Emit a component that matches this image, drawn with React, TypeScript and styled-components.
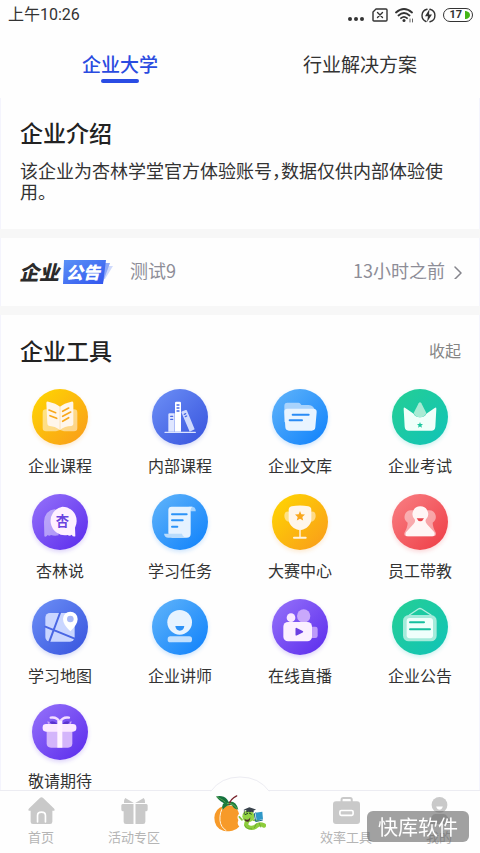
import React, { useState } from "react";
import styled, { createGlobalStyle } from "styled-components";

const GlobalStyle = createGlobalStyle`
  * { box-sizing: border-box; }
  body { margin: 0; background: #fff; }
  body, button {
    font-family: "Noto Sans CJK SC", "Noto Sans", sans-serif;
    color: #333;
  }
  button { margin: 0; padding: 0; border: 0; background: none; cursor: pointer; }
  a { color: inherit; text-decoration: none; }
  h2, p { margin: 0; }
  svg { display: block; }
`;

const Page = styled.div`
  display: flex;
  flex-direction: column;
  min-height: 100vh;
  background: #fefefe;
`;

const StatusBar = styled.div`
  display: flex;
  align-items: center;
  justify-content: space-between;
  height: 32px;
  padding: 0 7px 0 8px;
  font-size: 16px;
  line-height: 24px;
`;

const Clock = styled.time`
  padding-bottom: 2px;
  font-family: Roboto, "Noto Sans CJK SC", sans-serif;
`;

const StatusIcons = styled.div`
  display: flex;
  align-items: center;
  gap: 7px;
  padding-bottom: 2px;
`;

const Battery = styled.span`
  display: flex;
  align-items: center;
  justify-content: flex-end;
  gap: 3px;
  width: 30px;
  height: 14px;
  padding-right: 2px;
  border: 1px solid #333;
  border-radius: 7px;
  font-family: Roboto, sans-serif;
  font-size: 11px;
  font-weight: 700;
  line-height: 12px;
`;

const TabBar = styled.div`
  display: flex;
  height: 66px;
  padding-top: 18px;
`;

const Tab = styled.button<{ $active: boolean }>`
  display: flex;
  flex: 1;
  flex-direction: column;
  align-items: center;
  align-self: flex-start;
  gap: 1px;
  font-size: 19px;
  line-height: 28px;
  font-weight: ${(p) => (p.$active ? 500 : 400)};
  color: ${(p) => (p.$active ? "#2a4be0" : "#333")};

  &::after {
    content: "";
    width: 38px;
    height: 4px;
    border-radius: 2px;
    background: ${(p) => (p.$active ? "#2a4ce4" : "transparent")};
  }
`;

const Main = styled.main`
  flex: 1;
  box-shadow: inset 1px 0 #f4f4fd, inset -1px 0 #f4f4fd;
`;

const Divider = styled.div`
  height: 9px;
  background: #f7f7f7;
`;

const Intro = styled.section`
  padding: 18px 18px 27px 20px;
`;

const Heading = styled.h2`
  font-size: 23px;
  line-height: 32px;
  font-weight: 500;
  color: #222;
`;

const IntroText = styled.p`
  margin-top: 12px;
  font-size: 18px;
  line-height: 21px;
  font-feature-settings: "halt";
`;

const NoticeRow = styled.a`
  display: flex;
  align-items: center;
  height: 68px;
  padding: 0 18px 0 19px;
  font-size: 18px;
  line-height: 26px;
  color: #8d8d97;
`;

const NoticeBrand = styled.span`
  display: flex;
  align-items: center;
  gap: 3px;
  width: 111px;
  font-size: 20px;
  line-height: 24px;
  font-weight: 900;
  font-style: italic;
  color: #2b2b2b;
`;

const BrandBadge = styled.span`
  position: relative;
  width: 51px;
  height: 24px;
  padding-left: 4px;
  font-size: 17px;
  line-height: 24px;
  color: #fff;

  svg {
    position: absolute;
    inset: 0;
  }
  span {
    position: relative;
  }
`;

const NoticeTitle = styled.span`
  flex: 1;
  padding-bottom: 4px;
`;

const NoticeTime = styled.time`
  padding-bottom: 4px;
  margin-right: 9px;
`;

const ToolsHeader = styled.div`
  display: flex;
  align-items: center;
  justify-content: space-between;
  padding: 19px 19px 0 20px;
`;

const Collapse = styled.button`
  font-size: 16px;
  line-height: 24px;
  color: #858585;
`;

const ToolGrid = styled.div`
  display: grid;
  grid-template-columns: repeat(4, 1fr);
  row-gap: 19px;
  margin-top: 23px;
`;

const Tool = styled.a`
  display: flex;
  flex-direction: column;
  align-items: center;
  gap: 10px;
  font-size: 16px;
  line-height: 20px;
`;

const Disc = styled.span<{ $from: string; $to: string }>`
  width: 56px;
  height: 56px;
  border-radius: 50%;
  background: linear-gradient(135deg, ${(p) => p.$from}, ${(p) => p.$to});
  box-shadow: 0 2px 4px ${(p) => p.$to}33;
`;

const NavBar = styled.nav`
  position: sticky;
  bottom: 0;
  display: grid;
  grid-template-columns: 82fr 104fr 108fr 104fr 82fr;
  height: 63px;
  border-top: 1px solid #ececf2;
  background: #fefefe;
`;

const NavItem = styled.a`
  display: flex;
  flex-direction: column;
  align-items: center;
  gap: 4px;
  padding-top: 6px;
  font-size: 13px;
  line-height: 18px;
  color: #b5b5b5;
`;

const NavCenter = styled.a`
  position: relative;
  display: flex;
  justify-content: center;
  padding-top: 4px;
`;

const Bump = styled.svg`
  position: absolute;
  top: -15px;
  left: 50%;
  margin-left: -30px;
`;

const Watermark = styled.div`
  position: fixed;
  right: 11px;
  bottom: 11px;
  padding: 0 11px;
  border-radius: 6px;
  background: rgba(98, 98, 98, 0.6);
  font-size: 20px;
  line-height: 31px;
  color: #fff;
`;

type Tint = { from: string; to: string };
const gold: Tint = { from: "#ffd800", to: "#f99a1c" };
const indigo: Tint = { from: "#6d90f6", to: "#3652dd" };
const sky: Tint = { from: "#62b5fa", to: "#0d80fb" };
const green: Tint = { from: "#25cf94", to: "#10c3b8" };
const violet: Tint = { from: "#9673fa", to: "#5a2aec" };
const red: Tint = { from: "#f98084", to: "#ee3c45" };

const line = (stroke: string, width = 5) => ({
  stroke,
  strokeWidth: width,
  strokeLinecap: "round" as const,
  strokeLinejoin: "round" as const,
  fill: "none",
});

const starPath =
  "M0-15 4-5.500 15-4.500 7 3 9.500 13.500 0 8-9.500 13.500-7 3-15-4.500-4-5.500Z";

const tools: { label: string; tint: Tint; art: React.ReactNode }[] = [
  {
    label: "企业课程",
    tint: gold,
    art: (
      <>
        <path d="M42 61H126Q136 61 136 71V117Q136 127 126 127H96L84 123 72 127H42Q32 127 32 117V71Q32 61 42 61Z" fill="#fff" opacity=".5" />
        <path d="M43 42Q43 37 49 38Q72 43 84 53Q96 43 118 38Q124 37 124 42V105Q124 110 118 111Q98 112 84 122Q70 112 50 110Q46 109 46 103Z" fill="#fff6ea" />
        <path d="M84 53V121" {...line("#fbd9a0", 2)} />
        <path d="M51 63 71 71M54 80 74 88M92 67 110 57M92 82 116 69M92 97 110 86" {...line("#f8a81c")} />
      </>
    ),
  },
  {
    label: "内部课程",
    tint: indigo,
    art: (
      <>
        <path d="M49 77Q49 73 53 73H68V128H49Z" fill="#dfe6ff" />
        <path d="M69 42Q69 38 73 38H83Q87 38 87 42V128H69Z" fill="#fff" />
        <path d="M88 70Q88 68 91 67L101 63Q104 62 105 65L128 121 113 128Z" fill="#cfdafd" />
        <path d="M39 130H130" {...line("#dbe4ff", 4)} />
        <path d="M56 82H62M56 91H62M75 48H81M75 57H81M75 66H81M97 76 101 74M100 83 104 81" {...line("#4a69e5", 4)} />
      </>
    ),
  },
  {
    label: "企业文库",
    tint: sky,
    art: (
      <>
        <path d="M37 100V50Q37 41 46 41H80Q84 41 88 48H110Q118 48 123 53L130 64Z" fill="#a9d3fc" />
        <path d="M46 59H124Q135 59 134 70L130 115Q129 125 119 125H51Q41 125 40 115L37 70Q36 59 46 59Z" fill="#e9f4ff" />
        <path d="M62 77H110M53 94H90" {...line("#2a8bf5", 6)} />
      </>
    ),
  },
  {
    label: "企业考试",
    tint: green,
    art: (
      <>
        <path d="M40 57 65 74Q69 84 84 85 99 84 103 74L128 57Q133 53 133 60L130 113Q129 125 118 125H50Q39 125 38 113L35 60Q35 53 40 57Z" fill="#f0fffa" />
        <path d="M80 43Q84 36 88 43L103 72Q99 84 84 85 69 84 65 72Z" fill="#a8ebd4" />
        <path d={starPath} transform="translate(84 108) scale(.6)" fill="#1dc79e" />
      </>
    ),
  },
  {
    label: "杏林说",
    tint: violet,
    art: (
      <>
        <path d="M70 45Q38 49 36 83L37 127Q42 130 47 123 52 128 57 123 67 127 80 124Z" fill="#fff" opacity=".45" />
        <path d="M91 38A43 43 0 0 1 134 81Q134 92 129 101L130 127Q123 130 119 122 113 128 107 123A43 43 0 1 1 91 38Z" fill="#fff0ff" />
        <text x="91" y="97" textAnchor="middle" fontSize="40" fontWeight="700" fill="#6a43df">杏</text>
      </>
    ),
  },
  {
    label: "学习任务",
    tint: sky,
    art: (
      <>
        <path d="M110 38H122Q132 40 131 52H116Z" fill="#a5d3fd" />
        <path d="M59 38H121Q116 41 116 50V119Q116 131 104 131H60Q49 124 49 116V48Q49 38 59 38Z" fill="#e5f2ff" />
        <path d="M36 119H90Q92 128 103 131H49Q38 131 36 119Z" fill="#b9dcfc" />
        <path d="M60 61H104M60 79H92M60 98H76" {...line("#2b93f8", 6)} />
      </>
    ),
  },
  {
    label: "大赛中心",
    tint: gold,
    art: (
      <>
        <path d="M51 53Q37 51 37 66 37 83 55 84M117 53Q131 51 131 66 131 83 113 84" fill="#fff" opacity=".5" />
        <path d="M59 37Q84 32 109 37 118 39 118 48V76Q118 91 103 102 84 115 65 102 50 91 50 76V48Q50 39 59 37Z" fill="#fff6ea" />
        <path d="M84 109V128" {...line("#ffeac8", 5)} />
        <path d="M66 131H101" {...line("#fff3dd", 6)} />
        <path d={starPath} transform="translate(84 66)" fill="#f9a71c" />
      </>
    ),
  },
  {
    label: "员工带教",
    tint: red,
    art: (
      <>
        <path d="M58 49A20 20 0 0 0 47 86Q47 99 37 117 35 126 44 127H124Q134 126 132 117 122 99 122 86A20 20 0 0 0 111 49Z" fill="#fff" opacity=".45" />
        <path d="M85 37A23 23 0 0 1 102 76Q98 82 105 91L127 115Q131 127 121 127H48Q37 127 42 115L64 91Q72 82 68 76A23 23 0 0 1 85 37Z" fill="#fff5f5" />
        <path d="M74 73H96Q92 82 85 82 78 82 74 73Z" fill="#e9444d" />
      </>
    ),
  },
  {
    label: "学习地图",
    tint: indigo,
    art: (
      <>
        <rect x="40" y="42" width="88" height="86" rx="14" fill="#cad6ff" />
        <path d="M40 83 128 119M84 42 52 128" {...line("#4966e4", 6)} />
        <path d="M115 38A22 22 0 0 1 137 60Q137 76 115 97 93 76 93 60A22 22 0 0 1 115 38Z" fill="#fff" />
        <circle cx="115" cy="60" r="10" fill="#a9b9f7" />
      </>
    ),
  },
  {
    label: "企业讲师",
    tint: sky,
    art: (
      <>
        <circle cx="83" cy="70" r="37" fill="#e7f3ff" />
        <path d="M70 81H97Q95 95 83.500 95 72 95 70 81Z" fill="#2c91f7" />
        <rect x="47" y="112" width="73" height="18" rx="8" fill="#c2e0fe" />
      </>
    ),
  },
  {
    label: "在线直播",
    tint: violet,
    art: (
      <>
        <circle cx="95" cy="51" r="20" fill="#c9a8fb" />
        <circle cx="57" cy="56" r="13" fill="#f9e8ff" />
        <rect x="112" y="83" width="25" height="34" rx="7" fill="#bd9afa" />
        <rect x="34" y="69" width="86" height="58" rx="14" fill="#fbefff" />
        <path d="M73 89V107L91 98Z" fill="#6b3fe2" stroke="#6b3fe2" strokeWidth="5" strokeLinejoin="round" />
      </>
    ),
  },
  {
    label: "企业公告",
    tint: green,
    art: (
      <>
        <path d="M52 48 79 30Q84 27 89 30L117 48" {...line("#b4efe0", 4)} />
        <rect x="33" y="48" width="101" height="79" rx="17" fill="#a5ebdb" />
        <rect x="44" y="57" width="79" height="61" rx="9" fill="#effffb" />
        <path d="M54 70H96M54 91H114" {...line("#16bf9f", 6)} />
      </>
    ),
  },
  {
    label: "敬请期待",
    tint: violet,
    art: (
      <>
        <path d="M44 78H121V118Q121 131 108 131H57Q44 131 44 118Z" fill="#d4b5fb" />
        <path d="M48 60 46 52 60 56M117 60 119 52 105 56" fill="#cba9fb" />
        <path d="M83 55Q76 38 56 41M84 55Q91 38 111 41" {...line("#f3dcff", 7)} />
        <path d="M52 55Q65 46 76 60Q64 65 52 55ZM114 55Q102 46 91 60Q103 65 114 55Z" fill="#5b33cf" />
        <rect x="32" y="60" width="101" height="23" rx="10" fill="#fbe9ff" />
        <path d="M76 51H91V131H76Z" fill="#fff3ff" />
      </>
    ),
  },
];

const grey = "#c9c9c9";

const HomeIcon = () => (
  <svg width="27" height="27" viewBox="0 0 82 82">
    <path d="M36 3Q41-1 46 3L79 35Q84 42 76 42H74V75Q74 82 67 82H15Q8 82 8 75V42H6Q-2 42 3 35Z" fill={grey} />
    <path d="M29 76V56Q29 46 41 46 53 46 53 56V76" {...line("#fff", 5)} />
  </svg>
);

const GiftIcon = () => (
  <svg width="27" height="27" viewBox="0 0 82 82">
    <path d="M13 3 39 18H9Q8 8 13 3ZM69 3 43 18H73Q74 8 69 3Z" fill={grey} />
    <path d="M5 21H38V82H15Q8 82 8 75V43H5Q1 43 1 38V26Q1 21 5 21ZM44 21H77Q81 21 81 26V38Q81 43 77 43H74V75Q74 82 67 82H44Z" fill={grey} />
  </svg>
);

const CaseIcon = () => (
  <svg width="27" height="27" viewBox="0 0 82 82">
    <path d="M26 16V8Q26 3 31 3H52Q57 3 57 8V16" {...line(grey, 6)} />
    <rect y="13" width="82" height="69" rx="9" fill={grey} />
    <rect x="21" y="41" width="40" height="15" rx="4" {...line("#fff", 5)} />
  </svg>
);

const PersonIcon = () => (
  <svg width="27" height="27" viewBox="0 0 82 82">
    <circle cx="41" cy="24" r="24" fill={grey} />
    <path d="M31 29H51Q48 39 41 39 34 39 31 29Z" fill="#fff" />
    <path d="M28 52H54Q60 52 63 57L77 75Q79 82 72 82H10Q3 82 5 75L19 57Q22 52 28 52Z" fill={grey} />
  </svg>
);

const MascotIcon = () => (
  <svg width="52" height="37" viewBox="0 0 156 110">
    <path d="M28 33Q3 39 1 68 1 99 28 107 34 109 41 108 48 109 55 107 69 103 76 94 68 86 73 75 67 64 75 56 70 37 56 32 40 29 28 33Z" fill="#f79a29" />
    <path d="M29 34Q16 50 18 76 20 96 36 106" {...line("#fff3df", 3)} />
    <path d="M6 4Q27-1 39 12 46 20 44 30 29 25 20 18 12 12 6 4Z" fill="#14713d" />
    <path d="M9 5Q26 12 43 29" {...line("#71ba55", 2)} />
    <path d="M26 44Q20 22 41 20 66 14 73 43 61 43 54 30 40 26 26 44Z" fill="#1d7b3e" />
    <path d="M46 28Q47 13 68 2" {...line("#78222b", 4)} />
    <path d="M40 25Q58 23 69 40" {...line("#82c75f", 2)} />
    <path d="M100 78Q91 93 106 97 119 101 129 91 137 84 150 91" {...line("#8dcd3b", 13)} />
    <path d="M93 92Q99 104 113 101M121 98 127 86M136 84 140 96" {...line("#5e9d2b", 2)} />
    <path d="M84 74 76 65M119 75 132 76" {...line("#85c43a", 5)} />
    <circle cx="103" cy="63" r="18" fill="#94d444" />
    <path d="M91 70Q102 79 109 66 109 80 99 80 92 79 91 70Z" fill="#51352b" />
    <path d="M94 58 101 55M106 54 112 57" {...line("#274b22", 3)} />
    <path d="M90 43 106 36 126 43 109 51Z" fill="#38424b" />
    <path d="M97 46V52Q107 47 119 52V46L108 51Z" fill="#28343d" />
    <path d="M91 44V57" {...line("#28343d", 2)} />
    <path d="M124 53 145 50 147 72 128 76Z" fill="#3098c8" />
    <path d="M124 53 121 56 125 79 145 75" {...line("#1d6789", 3)} />
  </svg>
);

const tabs = ["企业大学", "行业解决方案"];

export default function App() {
  const [tab, setTab] = useState(0);

  return (
    <Page lang="zh-CN">
      <GlobalStyle />
      <StatusBar>
        <Clock>上午10:26</Clock>
        <StatusIcons>
          <svg width="18" height="16" viewBox="0 0 18 16" fill="#333">
            <circle cx="3" cy="12" r="2" />
            <circle cx="9" cy="12" r="2" />
            <circle cx="15" cy="12" r="2" />
          </svg>
          <svg width="16" height="14" viewBox="0 0 16 14">
            <path d="M4 1H14Q15 1 15 2V12Q15 13 14 13H2Q1 13 1 12V4Z" {...line("#333", 1.4)} />
            <path d="M5.500 4.500 10.500 9.500M10.500 4.500 5.500 9.500" {...line("#333", 1.4)} />
          </svg>
          <svg width="19" height="16" viewBox="0 0 19 16">
            <path d="M1 5.500Q9-1.500 17 5.500M3.500 8.500Q9 3.500 14.500 8.500M6 11.200Q9 8.500 12 11.200" {...line("#333", 1.8)} />
            <circle cx="9" cy="13.500" r="1.500" fill="#333" />
            <path d="M15 12V15M17.500 12V15" {...line("#666", 1)} />
          </svg>
          <svg width="15" height="15" viewBox="0 0 15 15">
            <path d="M6 1.200A6.500 6.500 0 0 0 5 13.500M9 1.200A6.500 6.500 0 0 1 9 13.800" {...line("#333", 1.4)} />
            <path d="M8.500 1 4 8.300H7L6 14 11 6.500H8Z" fill="#333" />
          </svg>
          <Battery>
            17
            <svg width="5" height="8" viewBox="0 0 5 8">
              <path d="M0 0H1Q5 1 5 4 5 7 1 8H0Z" fill="#43b516" />
            </svg>
          </Battery>
        </StatusIcons>
      </StatusBar>

      <TabBar role="tablist">
        {tabs.map((name, i) => (
          <Tab key={name} role="tab" aria-selected={tab === i} $active={tab === i} onClick={() => setTab(i)}>
            {name}
          </Tab>
        ))}
      </TabBar>

      <Main>
        <Intro>
          <Heading>企业介绍</Heading>
          <IntroText>该企业为杏林学堂官方体验账号，数据仅供内部体验使用。</IntroText>
        </Intro>
        <Divider />
        <NoticeRow href="#notice">
          <NoticeBrand>
            企业
            <BrandBadge>
              <svg width="51" height="24" viewBox="0 0 51 24">
                <defs>
                  <linearGradient id="badge" x1="0" y1="0" x2="1" y2="1">
                    <stop offset="0" stopColor="#5b93f7" />
                    <stop offset="1" stopColor="#3154ee" />
                  </linearGradient>
                </defs>
                <path d="M46 6H51L43 19H40Z" fill="#cfdafc" />
                <path d="M43 3H48L41 22H38Z" fill="#8ea8f7" />
                <path d="M2 0H44L41 24H1Z" fill="url(#badge)" />
              </svg>
              <span>公告</span>
            </BrandBadge>
          </NoticeBrand>
          <NoticeTitle>测试9</NoticeTitle>
          <NoticeTime>13小时之前</NoticeTime>
          <svg width="8" height="14" viewBox="0 0 8 14">
            <path d="M1 2 7 8 1 14" {...line("#85858c", 1.5)} />
          </svg>
        </NoticeRow>
        <Divider />
        <section>
          <ToolsHeader>
            <Heading>企业工具</Heading>
            <Collapse>收起</Collapse>
          </ToolsHeader>
          <ToolGrid>
            {tools.map(({ label, tint, art }) => (
              <Tool key={label} href="#tool">
                <Disc $from={tint.from} $to={tint.to}>
                  <svg width="56" height="56" viewBox="0 0 168 168" aria-hidden="true">
                    {art}
                  </svg>
                </Disc>
                {label}
              </Tool>
            ))}
          </ToolGrid>
        </section>
      </Main>

      <NavBar>
        <NavItem href="#home"><HomeIcon />首页</NavItem>
        <NavItem href="#events"><GiftIcon />活动专区</NavItem>
        <NavCenter href="#mascot" aria-label="杏林学堂">
          <Bump width="60" height="17" viewBox="0 0 60 17">
            <path d="M1 15Q11 1 30 1T59 15V17H1Z" fill="#fefefe" />
            <path d="M1 15Q11 1 30 1T59 15" {...line("#ececf2", 1)} />
          </Bump>
          <MascotIcon />
        </NavCenter>
        <NavItem href="#efficiency"><CaseIcon />效率工具</NavItem>
        <NavItem href="#me"><PersonIcon />我的</NavItem>
      </NavBar>
      <Watermark>快库软件</Watermark>
    </Page>
  );
}
